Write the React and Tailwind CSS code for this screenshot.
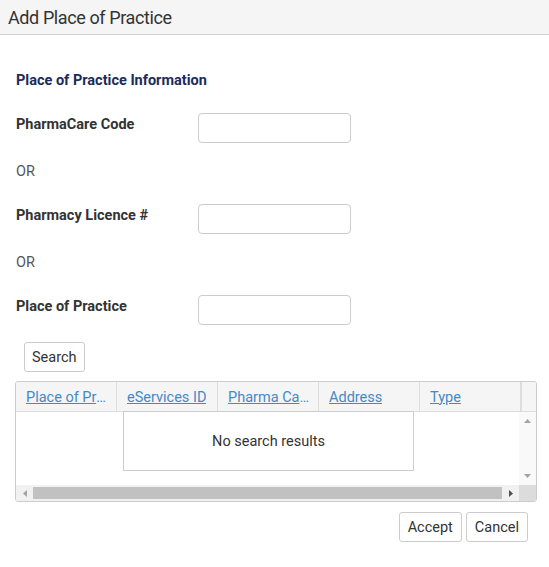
import React from "react";

const font = { fontFamily: "Roboto, 'Liberation Sans', sans-serif" };

function Field({ label }) {
  return (
    <div className="flex items-start">
      <div className="w-[182px] pt-[2px] text-[14.5px] leading-[20px] font-bold text-[#333]">{label}</div>
      <input className="w-[153px] h-[30px] border border-[#ccc] rounded-[4px] bg-white outline-none" />
    </div>
  );
}

function Or() {
  return <div className="pt-[1px] text-[14.5px] leading-[20px] text-[#555]">OR</div>;
}

function HeadCell({ children, last }) {
  return (
    <div className={`w-[101px] shrink-0 h-full flex items-center pl-[10px] pr-[8px] ${last ? "" : "border-r border-[#ddd]"} overflow-hidden`}>
      <span className="block min-w-0 text-[14.5px] text-[#4489c9] underline whitespace-nowrap overflow-hidden text-ellipsis pt-[2px]">{children}</span>
    </div>
  );
}

export default function App() {
  return (
    <div className="w-[549px] h-[567px] bg-white text-[#333]" style={font}>
      <div className="h-[35px] bg-[#f5f5f5] border-b border-[#cfcfcf] flex items-center pl-[8px]">
        <span className="text-[18px] text-[#333] tracking-[-0.4px]">Add Place of Practice</span>
      </div>
      <div className="pl-[16px] pt-[36px]">
        <div className="text-[14.5px] leading-[20px] font-bold text-[#1d2b5a]">Place of Practice Information</div>
        <div className="mt-[22px] flex flex-col">
          <Field label="PharmaCare Code" />
          <div className="mt-[18px]"><Or /></div>
          <div className="mt-[22px]"><Field label="Pharmacy Licence #" /></div>
          <div className="mt-[18px]"><Or /></div>
          <div className="mt-[22px]"><Field label="Place of Practice" /></div>
        </div>
      </div>
      <div className="pl-[24px] mt-[17px]">
        <button className="h-[30px] px-[7px] pt-[1px] border border-[#ccc] rounded-[3px] bg-white text-[14.5px] text-[#333]">Search</button>
      </div>
      <div className="mx-[15px] mt-[9px] w-[522px] h-[121px] border border-[#ccc] rounded-[3px] flex flex-col overflow-hidden relative">
        <div className="h-[30px] shrink-0 bg-[#f5f5f5] border-b border-[#ddd] flex">
          <HeadCell>Place of Practice</HeadCell>
          <HeadCell>eServices ID</HeadCell>
          <HeadCell>Pharma Care Code</HeadCell>
          <HeadCell>Address</HeadCell>
          <HeadCell>Type</HeadCell>
          <div className="flex-1 border-l border-[#ddd]" />
        </div>
        <div className="flex flex-1">
          <div className="flex-1 bg-white" />
          <div className="w-[17px] bg-[#f9f9f9] flex flex-col items-center justify-between py-[7px]">
            <svg width="7" height="4" viewBox="0 0 7 4"><path d="M0 4 L3.5 0 L7 4 Z" fill="#a3a3a3" /></svg>
            <svg width="7" height="4" viewBox="0 0 7 4"><path d="M0 0 L3.5 4 L7 0 Z" fill="#a3a3a3" /></svg>
          </div>
        </div>
        <div className="h-[16px] shrink-0 flex">
          <div className="flex-1 bg-[#f1f1f1] flex items-center">
            <div className="w-[17px] flex justify-center">
              <svg width="4" height="7" viewBox="0 0 4 7"><path d="M4 0 L0 3.5 L4 7 Z" fill="#a3a3a3" /></svg>
            </div>
            <div className="flex-1 h-[12px] bg-[#c1c1c1]" />
            <div className="w-[17px] flex justify-center">
              <svg width="4" height="7" viewBox="0 0 4 7"><path d="M0 0 L4 3.5 L0 7 Z" fill="#505050" /></svg>
            </div>
          </div>
          <div className="w-[17px] bg-[#dcdcdc]" />
        </div>
        <div className="absolute left-[107px] top-[29px] w-[291px] h-[60px] border border-[#ccc] bg-white flex items-center justify-center">
          <span className="text-[14.5px] text-[#333] pt-[1px]">No search results</span>
        </div>
      </div>
      <div className="flex justify-end gap-[4px] pr-[21px] mt-[10px]">
        <button className="h-[30px] px-[8px] pt-[1px] border border-[#ccc] rounded-[3px] bg-white text-[14.5px] text-[#333]">Accept</button>
        <button className="h-[30px] px-[8px] pt-[1px] border border-[#ccc] rounded-[3px] bg-white text-[14.5px] text-[#333]">Cancel</button>
      </div>
    </div>
  );
}
